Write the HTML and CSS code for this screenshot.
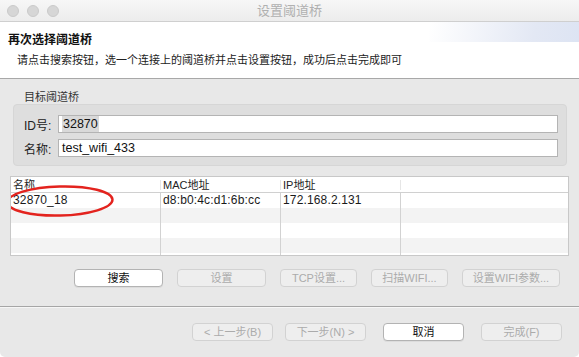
FILE: index.html
```html
<!DOCTYPE html>
<html lang="zh">
<head>
<meta charset="utf-8">
<title>设置阈道桥</title>
<link rel="stylesheet" href="styles.css">
</head>
<body>
<div class="window">
  <div class="titlebar">
    <div class="lights"><span class="light"></span><span class="light"></span><span class="light"></span></div>
    <div class="title">设置阈道桥</div>
  </div>
  <div class="header">
    <div class="h1">再次选择阈道桥</div>
    <div class="sub">请点击搜索按钮，选一个连接上的阈道桥并点击设置按钮，成功后点击完成即可</div>
  </div>
  <div class="content">
    <div class="group-label">目标阈道桥</div>
    <div class="group">
      <div class="field"><span class="flabel">ID号:</span><div class="input"><span class="sel">32870</span></div></div>
      <div class="field"><span class="flabel">名称:</span><div class="input">test_wifi_433</div></div>
    </div>
    <div class="table">
      <div class="row head"><div class="cell">名称</div><div class="cell">MAC地址</div><div class="cell">IP地址</div><div class="cell"></div></div>
      <div class="row"><div class="cell">32870_18</div><div class="cell">d8:b0:4c:d1:6b:cc</div><div class="cell">172.168.2.131</div><div class="cell"></div></div>
      <div class="row alt"><div class="cell"></div><div class="cell"></div><div class="cell"></div><div class="cell"></div></div>
      <div class="row"><div class="cell"></div><div class="cell"></div><div class="cell"></div><div class="cell"></div></div>
      <div class="row alt"><div class="cell"></div><div class="cell"></div><div class="cell"></div><div class="cell"></div></div>
      <div class="row"><div class="cell"></div><div class="cell"></div><div class="cell"></div><div class="cell"></div></div>
      <svg class="circle" width="110" height="34" viewBox="0 0 110 34"><ellipse cx="55" cy="17" rx="52.5" ry="14.5" fill="none" stroke="#e3231e" stroke-width="2.4" transform="rotate(-1.5 55 17)"/></svg>
    </div>
    <div class="actions">
      <button class="btn b1">搜索</button>
      <button class="btn b1 dis">设置</button>
      <button class="btn b2 dis">TCP设置...</button>
      <button class="btn b2 dis">扫描WIFI...</button>
      <button class="btn b3 dis">设置WIFI参数...</button>
    </div>
  </div>
  <div class="footer">
    <button class="btn nav dis">&lt; 上一步(B)</button>
    <button class="btn nav dis gap-s">下一步(N) &gt;</button>
    <button class="btn nav gap-l">取消</button>
    <button class="btn nav dis gap-l">完成(F)</button>
  </div>
</div>
</body>
</html>
```

FILE: styles.css
```css
* { box-sizing: border-box; }
html, body { margin: 0; padding: 0; background: #ffffff; }
body {
  font-family: "Liberation Sans", "Noto Sans CJK SC", sans-serif;
  color: #1a1a1a;
}
.window {
  width: 579px;
  height: 357px;
  background: #e8e8e8;
  border-radius: 0 0 5px 5px;
  overflow: hidden;
  display: flex;
  flex-direction: column;
}
.titlebar {
  height: 22px;
  flex: none;
  background: linear-gradient(#f7f7f7, #ececec);
  border-bottom: 1px solid #cfcfcf;
  position: relative;
  display: flex;
  align-items: center;
}
.lights {
  display: flex;
  gap: 8px;
  padding-left: 7px;
  padding-top: 1px;
}
.light {
  width: 12px;
  height: 12px;
  border-radius: 50%;
  background: #d6d6d6;
  border: 1px solid #cacaca;
}
.title {
  position: absolute;
  left: 0;
  right: 0;
  top: 3px;
  text-align: center;
  font-size: 13px;
  color: #b0b0b0;
  line-height: 16px;
}
.header {
  height: 57px;
  flex: none;
  background: #ffffff;
  border-bottom: 1px solid #a8a8a8;
  position: relative;
  padding: 9px 0 0 8px;
}
.header::before {
  content: "";
  position: absolute;
  right: 0;
  top: 0;
  width: 150px;
  height: 20px;
  background: linear-gradient(100deg, rgba(224,230,244,0) 0%, #e3e8f4 70%, #dde4f3 100%);
}
.h1 {
  font-size: 12px;
  font-weight: bold;
  line-height: 18px;
  color: #111;
  position: relative;
}
.sub {
  font-size: 11px;
  line-height: 16px;
  margin-top: 3px;
  padding-left: 9px;
  color: #222;
}
.content {
  padding: 11px 10px 0 10px;
  flex: none;
}
.group-label {
  font-size: 11px;
  line-height: 14px;
  padding-left: 14px;
  color: #333;
}
.group {
  margin: 0 2px 0 3px;
  background: #dedede;
  border: 1px solid #d6d6d6;
  border-radius: 4px;
  height: 62px;
  padding: 10px 8px 0 10px;
  display: flex;
  flex-direction: column;
  gap: 6px;
}
.field {
  display: flex;
  align-items: center;
}
.flabel {
  width: 34px;
  font-size: 12px;
  color: #222;
}
.input {
  flex: 1;
  height: 18px;
  background: #ffffff;
  border: 1px solid #b4b4b4;
  font-size: 12.5px;
  line-height: 16px;
  padding-left: 3px;
  color: #111;
}
.sel {
  background: #d9d9d9;
  padding: 0 1px;
  display: inline-block;
  line-height: 16px;
}
.table {
  margin-top: 10px;
  width: 559px;
  height: 80px;
  border: 1px solid #c8c8c8;
  background: #ffffff;
  position: relative;
  overflow: hidden;
}
.row {
  display: grid;
  grid-template-columns: 150px 120px 120px 1fr;
  height: 15px;
  font-size: 12px;
  line-height: 15px;
}
.row.alt { background: #f3f3f3; }
.row .cell {
  border-right: 1px solid #d2d2d2;
  padding-left: 2px;
  white-space: nowrap;
  overflow: hidden;
  letter-spacing: 0.15px;
}
.row .cell:last-child { border-right: none; }
.row.head {
  height: 16px;
  line-height: 12px;
  font-size: 11px;
  border-bottom: 1px solid #d0d0d0;
  color: #222;
}
.row.head .cell {
  border-right: 1px solid #e6e6e6;
  margin: 3px 0 2px;
  padding-top: 0;
  line-height: 10px;
  overflow: visible;
  letter-spacing: 0;
}
.row.head .cell:last-child { border-right: none; }
.circle {
  position: absolute;
  left: -6px;
  top: 7px;
}
.actions {
  display: flex;
  justify-content: flex-end;
  gap: 14px;
  margin-top: 13px;
  padding-right: 9px;
}
.btn {
  height: 18px;
  border: 1px solid #b3b3b3;
  border-radius: 4px;
  background: #ffffff;
  font-family: "Liberation Sans", "Noto Sans CJK SC", sans-serif;
  font-size: 11px;
  line-height: 16px;
  padding: 0;
  color: #111;
  box-shadow: 0 1px 0 rgba(0,0,0,0.05);
}
.btn.dis {
  background: #eeeeee;
  border-color: #d2d2d2;
  color: #ababab;
  box-shadow: none;
}
.b1 { width: 89px; }
.b2 { width: 77px; }
.b3 { width: 98px; }
.footer {
  margin-top: 19px;
  border-top: 1px solid #a6a6a6;
  box-shadow: inset 0 1px 0 #f6f6f6;
  padding: 16px 17px 0 0;
  display: flex;
  justify-content: flex-end;
  flex: 1;
  align-items: flex-start;
}
.nav { width: 81px; }
.gap-s { margin-left: 12px; }
.gap-l { margin-left: 17px; }
```
